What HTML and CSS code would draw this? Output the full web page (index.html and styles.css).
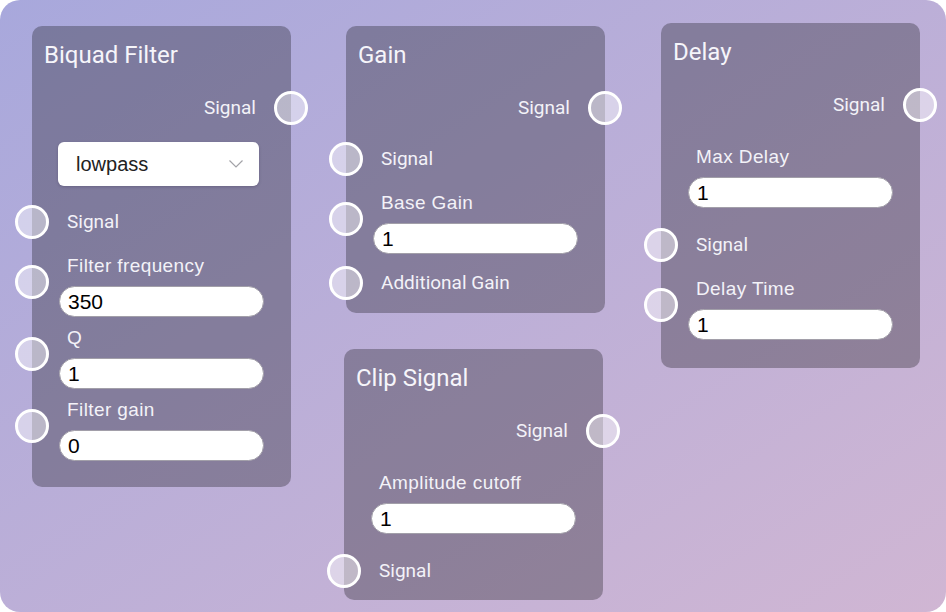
FILE: index.html
```html
<!DOCTYPE html>
<html lang="en">
<head>
<meta charset="utf-8">
<title>Audio nodes</title>
<link rel="stylesheet" href="styles.css">
</head>
<body>
<main class="canvas">

  <section class="node biquad">
    <h2 class="title">Biquad Filter</h2>
    <div class="row out"><span class="name">Signal</span><span class="port"></span></div>
    <div class="select"><span>lowpass</span>
      <svg class="chev" width="14" height="8" viewBox="0 0 14 8"><path d="M0.5 0.5 L7 7 L13.5 0.5" fill="none" stroke="#a3a3a8" stroke-width="1.2"/></svg>
    </div>
    <div class="row in"><span class="port"></span><span class="name">Signal</span></div>
    <div class="field"><span class="port"></span><label class="flabel">Filter frequency</label><input class="num" type="text" value="350"></div>
    <div class="field"><span class="port"></span><label class="flabel">Q</label><input class="num" type="text" value="1"></div>
    <div class="field"><span class="port"></span><label class="flabel">Filter gain</label><input class="num" type="text" value="0"></div>
  </section>

  <section class="node gain">
    <h2 class="title">Gain</h2>
    <div class="row out"><span class="name">Signal</span><span class="port"></span></div>
    <div class="row in"><span class="port"></span><span class="name">Signal</span></div>
    <div class="field"><span class="port"></span><label class="flabel">Base Gain</label><input class="num" type="text" value="1"></div>
    <div class="row in tight"><span class="port"></span><span class="name">Additional Gain</span></div>
  </section>

  <section class="node clip">
    <h2 class="title">Clip Signal</h2>
    <div class="row out"><span class="name">Signal</span><span class="port"></span></div>
    <div class="field plain"><label class="flabel">Amplitude cutoff</label><input class="num" type="text" value="1"></div>
    <div class="row in"><span class="port"></span><span class="name">Signal</span></div>
  </section>

  <section class="node delay">
    <h2 class="title">Delay</h2>
    <div class="row out"><span class="name">Signal</span><span class="port"></span></div>
    <div class="field plain"><label class="flabel">Max Delay</label><input class="num" type="text" value="1"></div>
    <div class="row in"><span class="port"></span><span class="name">Signal</span></div>
    <div class="field"><span class="port"></span><label class="flabel">Delay Time</label><input class="num" type="text" value="1"></div>
  </section>

</main>
</body>
</html>
```

FILE: styles.css
```css
html, body {
  margin: 0;
  padding: 0;
  background: #ffffff;
}

.canvas {
  position: relative;
  width: 946px;
  height: 612px;
  border-radius: 20px;
  overflow: hidden;
  background: linear-gradient(to bottom right, #a8a8dc, #d0b6d3);
}

.node {
  position: absolute;
  box-sizing: border-box;
  width: 259px;
  padding-top: 13px;
  border-radius: 10px;
  background: rgba(0, 0, 0, 0.28);
  display: flex;
  flex-direction: column;
}

.biquad { left: 32px; top: 26px; height: 461px; }
.gain   { left: 346px; top: 26px; height: 287px; }
.clip   { left: 344px; top: 349px; height: 251px; }
.delay  { left: 661px; top: 23px; height: 345px; }

.title {
  margin: 0;
  padding-left: 12px;
  height: 32px;
  line-height: 32px;
  font-family: Roboto, "Liberation Sans", sans-serif;
  font-weight: 400;
  font-size: 24px;
  color: #f6f5fa;
}

.row {
  position: relative;
  height: 22px;
  margin-top: 22px;
  padding: 0 35px;
  display: flex;
  align-items: center;
}

.row.out {
  margin-top: 26px;
  justify-content: flex-end;
}

.name {
  font-family: Roboto, "Liberation Sans", sans-serif;
  font-size: 19px;
  line-height: 22px;
  color: #f3f2f8;
  white-space: nowrap;
}

.port {
  position: absolute;
  box-sizing: border-box;
  width: 34px;
  height: 34px;
  border: 3px solid #ffffff;
  border-radius: 50%;
  background: rgba(255, 255, 255, 0.45);
}

.row .port { top: -6px; }
.row.out .port { right: -17px; }
.row.in .port { left: -17px; }

.field {
  position: relative;
  margin-top: 22px;
  padding: 0 27px;
  display: flex;
  flex-direction: column;
}

.field .port {
  top: 10px;
  left: -17px;
}

.flabel {
  height: 22px;
  line-height: 22px;
  padding-left: 8px;
  font-family: "Liberation Sans", Arial, sans-serif;
  font-size: 19px;
  letter-spacing: 0.4px;
  color: #f3f2f8;
  white-space: nowrap;
}

.num {
  box-sizing: border-box;
  width: 205px;
  height: 31px;
  margin: 9px 0 0;
  padding: 0 8px;
  border: 1px solid #a29fa9;
  border-radius: 16px;
  background: #ffffff;
  font-family: "Liberation Sans", Arial, sans-serif;
  font-size: 21px;
  color: #000000;
  outline: none;
}

.select {
  box-sizing: border-box;
  height: 44px;
  margin: 23px 32px 0 26px;
  padding: 0 16px 0 18px;
  border-radius: 6px;
  background: #ffffff;
  box-shadow: 0 1px 3px rgba(40, 30, 60, 0.25);
  display: flex;
  align-items: center;
  justify-content: space-between;
  font-family: "Liberation Sans", Arial, sans-serif;
  font-size: 20px;
  color: #222222;
}

.chev { display: block; }

/* vertical rhythm between items */
.field + .field { margin-top: 10px; }
.row.out + .field { margin-top: 30px; }
.row.out + .row.in { margin-top: 29px; }
.select + .row { margin-top: 25px; }
.field + .row { margin-top: 26px; }
.field + .row.tight { margin-top: 18px; }
```
